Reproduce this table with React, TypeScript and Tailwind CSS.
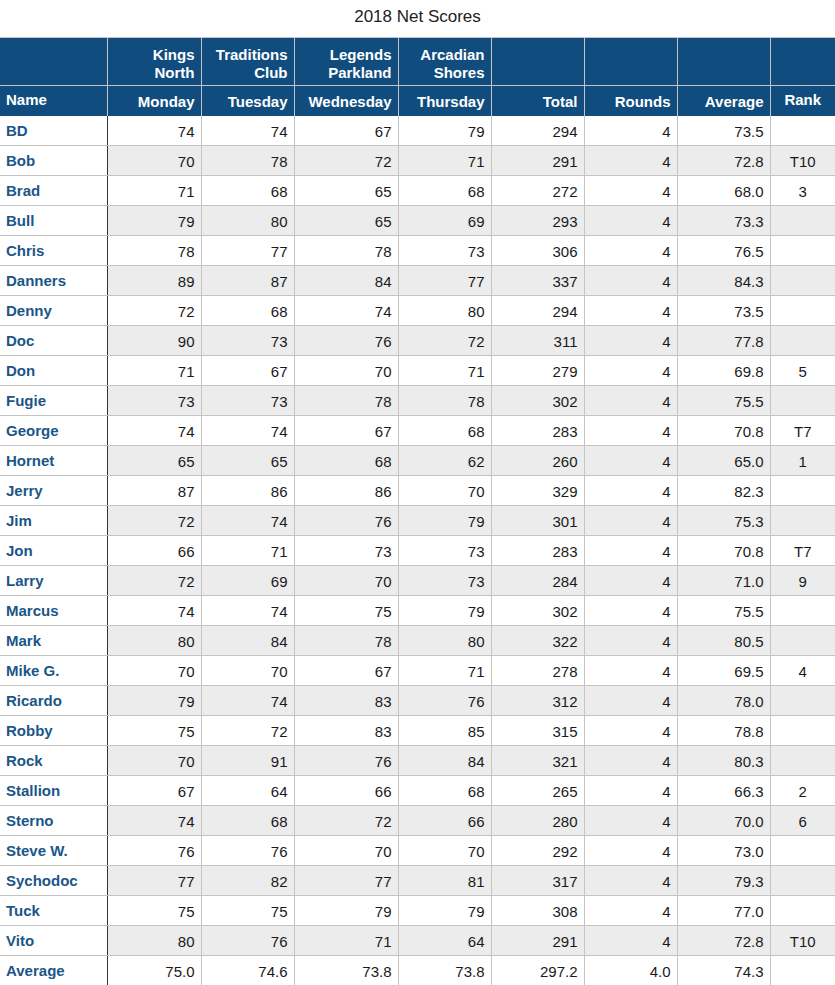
const rows: [string, number, number, number, number, number, number, string, string][] = [
  ["BD", 74, 74, 67, 79, 294, 4, "73.5", ""],
  ["Bob", 70, 78, 72, 71, 291, 4, "72.8", "T10"],
  ["Brad", 71, 68, 65, 68, 272, 4, "68.0", "3"],
  ["Bull", 79, 80, 65, 69, 293, 4, "73.3", ""],
  ["Chris", 78, 77, 78, 73, 306, 4, "76.5", ""],
  ["Danners", 89, 87, 84, 77, 337, 4, "84.3", ""],
  ["Denny", 72, 68, 74, 80, 294, 4, "73.5", ""],
  ["Doc", 90, 73, 76, 72, 311, 4, "77.8", ""],
  ["Don", 71, 67, 70, 71, 279, 4, "69.8", "5"],
  ["Fugie", 73, 73, 78, 78, 302, 4, "75.5", ""],
  ["George", 74, 74, 67, 68, 283, 4, "70.8", "T7"],
  ["Hornet", 65, 65, 68, 62, 260, 4, "65.0", "1"],
  ["Jerry", 87, 86, 86, 70, 329, 4, "82.3", ""],
  ["Jim", 72, 74, 76, 79, 301, 4, "75.3", ""],
  ["Jon", 66, 71, 73, 73, 283, 4, "70.8", "T7"],
  ["Larry", 72, 69, 70, 73, 284, 4, "71.0", "9"],
  ["Marcus", 74, 74, 75, 79, 302, 4, "75.5", ""],
  ["Mark", 80, 84, 78, 80, 322, 4, "80.5", ""],
  ["Mike G.", 70, 70, 67, 71, 278, 4, "69.5", "4"],
  ["Ricardo", 79, 74, 83, 76, 312, 4, "78.0", ""],
  ["Robby", 75, 72, 83, 85, 315, 4, "78.8", ""],
  ["Rock", 70, 91, 76, 84, 321, 4, "80.3", ""],
  ["Stallion", 67, 64, 66, 68, 265, 4, "66.3", "2"],
  ["Sterno", 74, 68, 72, 66, 280, 4, "70.0", "6"],
  ["Steve W.", 76, 76, 70, 70, 292, 4, "73.0", ""],
  ["Sychodoc", 77, 82, 77, 81, 317, 4, "79.3", ""],
  ["Tuck", 75, 75, 79, 79, 308, 4, "77.0", ""],
  ["Vito", 80, 76, 71, 64, 291, 4, "72.8", "T10"],
];

const courses = [
  ["Kings", "North"],
  ["Traditions", "Club"],
  ["Legends", "Parkland"],
  ["Arcadian", "Shores"],
];

const days = ["Monday", "Tuesday", "Wednesday", "Thursday", "Total", "Rounds", "Average"];

export default function App() {
  return (
    <div className="w-[835px] bg-white font-['Liberation_Sans',Arial,sans-serif] text-[15px] text-[#1a1a1a]">
      <div className="flex h-[37px] items-center justify-center pb-[4px] text-[17px] text-[#222]">2018 Net Scores</div>
      <table className="w-[835px] table-fixed border-collapse">
        <colgroup>
          <col className="w-[107px]" />
          <col className="w-[94px]" />
          <col className="w-[93px]" />
          <col className="w-[104px]" />
          <col className="w-[93px]" />
          <col className="w-[93px]" />
          <col className="w-[93px]" />
          <col className="w-[93px]" />
          <col className="w-[65px]" />
        </colgroup>
        <thead className="bg-[#104d7e] font-bold text-white">
          <tr className="h-[48px]">
            <th className="border-x-0 border-t border-[#c4c4c4]" />
            {courses.map(([a, b]) => (
              <th key={a} className="border border-[#c4c4c4] px-[6px] pt-[5px] text-right align-middle leading-[18px]">
                {a}
                <br />
                {b}
              </th>
            ))}
            <th className="border border-[#c4c4c4]" />
            <th className="border border-[#c4c4c4]" />
            <th className="border border-[#c4c4c4]" />
            <th className="border-y border-l border-[#c4c4c4]" />
          </tr>
          <tr className="h-[30px]">
            <th className="border-t border-r border-[#c4c4c4] px-[6px] pb-[2px] text-left">Name</th>
            {days.map((d) => (
              <th key={d} className="border border-b-0 border-[#c4c4c4] px-[6px] pt-[2px] text-right">
                {d}
              </th>
            ))}
            <th className="border-t border-l border-[#c4c4c4] pb-[2px] text-center">Rank</th>
          </tr>
        </thead>
        <tbody>
          {rows.map((r, i) => (
            <tr key={r[0]} className={i % 2 ? "h-[30px] bg-[#ececec]" : "h-[30px] bg-white"}>
              <td className="border-b border-r border-b-[#c4c4c4] border-r-[#333] bg-white px-[6px] pt-[2px] font-bold text-[#1a5688]">
                {r[0]}
              </td>
              {r.slice(1, 8).map((v, j) => (
                <td key={j} className="border border-t-0 border-[#c4c4c4] px-[6px] pt-[3px] text-right">
                  {v}
                </td>
              ))}
              <td className="border-b border-l border-[#c4c4c4] pt-[3px] text-center">{r[8]}</td>
            </tr>
          ))}
          <tr className="h-[30px] bg-white">
            <td className="border-b border-r border-b-[#c4c4c4] border-r-[#333] px-[6px] pt-[2px] font-bold text-[#1a5688]">
              Average
            </td>
            {["75.0", "74.6", "73.8", "73.8", "297.2", "4.0", "74.3"].map((v, j) => (
              <td key={j} className="border border-t-0 border-[#c4c4c4] px-[6px] pt-[3px] text-right">
                {v}
              </td>
            ))}
            <td className="border-b border-l border-[#c4c4c4]" />
          </tr>
        </tbody>
      </table>
    </div>
  );
}
